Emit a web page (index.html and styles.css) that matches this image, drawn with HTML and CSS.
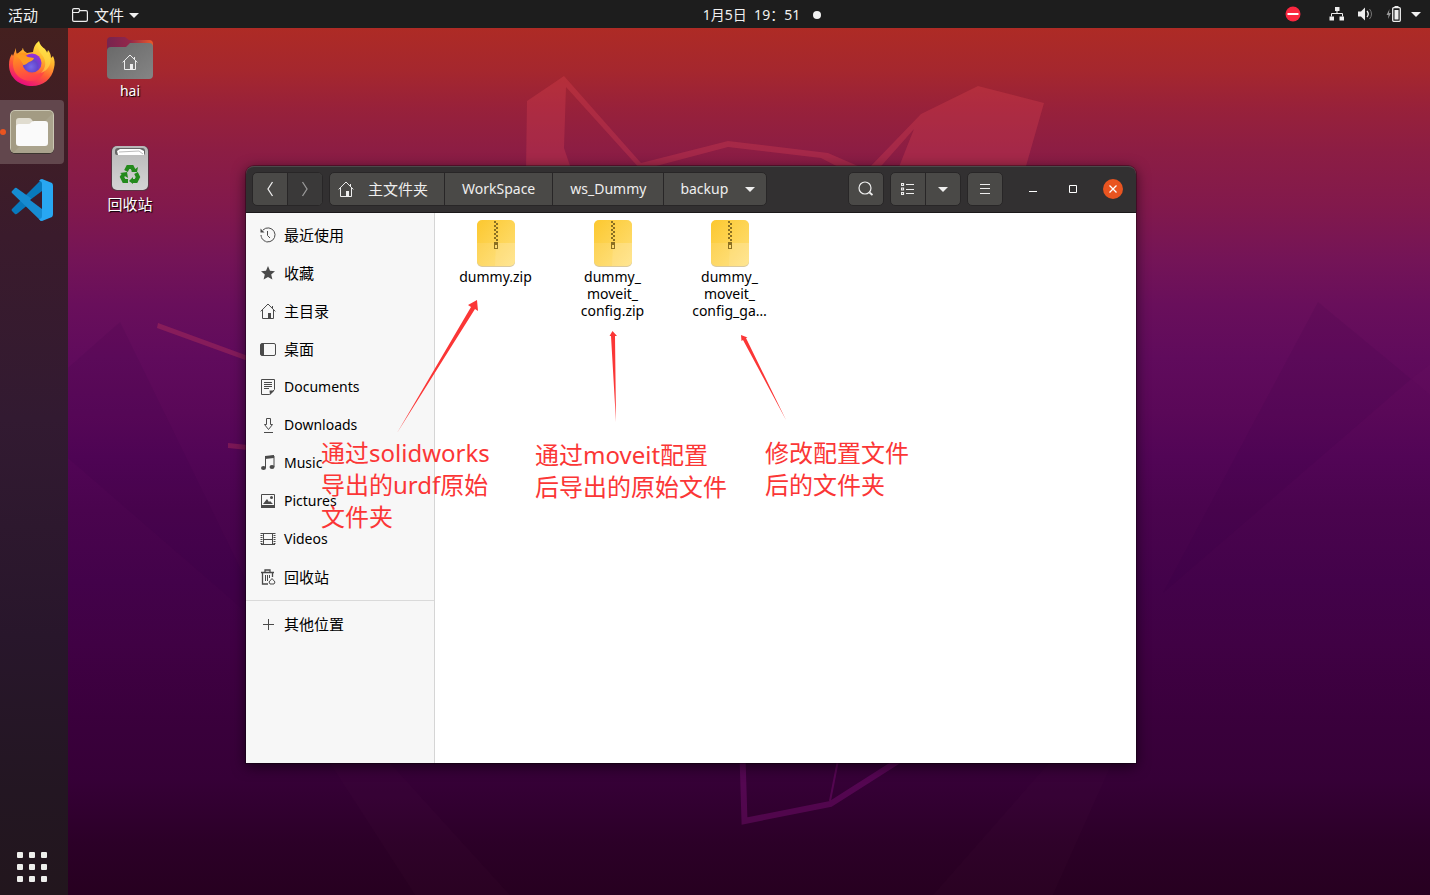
FILE: index.html
```html
<!DOCTYPE html>
<html lang="zh-CN">
<head>
<meta charset="utf-8">
<title>backup</title>
<link rel="stylesheet" href="styles.css">
</head>
<body>
<svg width="0" height="0" class="defs" aria-hidden="true">
  <defs>
    <linearGradient id="zipFill" x1="0" y1="0" x2="1" y2="1"><stop offset="0" stop-color="#fcc82f"/><stop offset="1" stop-color="#ffe079"/></linearGradient>
    <symbol id="zip" viewBox="0 0 38 47">
      <rect x="0" y="1" width="38" height="46" rx="5" fill="#d9c9a0"/>
      <rect x="0" y="0" width="38" height="46" rx="5" fill="url(#zipFill)"/>
      <path d="M0 23h38v18a5 5 0 0 1-5 5H5a5 5 0 0 1-5-5z" fill="#fff" opacity=".1"/>
      <path d="M19 23h19v18a5 5 0 0 1-5 5H18z" fill="#fff" opacity=".1"/>
      <path d="M17 1h2v2h-2zm2 2h2v2h-2zm-2 2h2v2h-2zm2 2h2v2h-2zm-2 2h2v2h-2zm2 2h2v2h-2zm-2 2h2v2h-2zm2 2h2v2h-2zm-2 2h2v2h-2zm2 2h2v2h-2z" fill="#8a6f22"/>
      <path d="M17 22h4v7h-4zm1 3v3h2v-3z" fill="#8a6f22" fill-rule="evenodd"/>
    </symbol>
    <symbol id="home" viewBox="0 0 16 16"><path d="M.7 8.4 8 1l7.300 7.400M2.500 7v8.500h11V7M12.500 3v2.500" fill="none" stroke="currentColor"/><path d="M8 10h3v5.500H8z" fill="currentColor"/></symbol>
    <symbol id="down" viewBox="0 0 10 5"><path d="M0 0h10L5 5z" fill="currentColor"/></symbol>
  </defs>
</svg>
<div class="desktop">
  <svg class="wallpaper" viewBox="0 0 1430 895" preserveAspectRatio="xMidYMid slice" aria-hidden="true">
    <g fill="#ee4c56" opacity=".25">
      <path d="M525 240 527 101 564 76 641 163 728 141 828 153 867 170 921 114 978 86 1044 103 1005 240H870L914 129 867 182 821 158 728 147 641 170 566 87 564 148 595 240z"/>
      <path d="m158 323 90 33v5l-91-33zM228 443l20 2v5l-20-2z"/>
    </g>
    <g fill="none" stroke="#96158c" opacity=".32"><path d="m742 740 2.500 81 86-17 88-56" stroke-width="6"/><path d="m842 740-12 61" stroke-width="2"/></g>
    <g fill="#300040" opacity=".09"><path d="m1318 302 93 77-248 214zM120 322l-52 46v90l178 154v-32z"/></g>
    <g fill="#d050a0" opacity=".02"><path d="M1049 763h63l-59 132H933zM330 763h60l120 132h-95zM1430 364l-19 15 19 16z"/></g>
  </svg>

  <header class="topbar">
    <div class="top-left">
      <button class="plain">活动</button>
      <button class="plain app-menu">
        <svg width="16" height="14" viewBox="0 0 16 14"><path d="M.6 12V2Q.6.600 2 .6h4.500q1 0 1 1v1H14q1.400 0 1.400 1.400v8q0 1.400-1.400 1.400H2Q.6 13.400.6 12zM.6 4.500h6l1-1.900" fill="none" stroke="#eee" stroke-width="1.200"/></svg>
        <span>文件</span>
        <svg width="10" height="5"><use href="#down"/></svg>
      </button>
    </div>
    <button class="plain clock"><span>1月5日&nbsp; 19：51</span><i class="dot"></i></button>
    <div class="top-right">
      <svg class="busy" width="16" height="16" viewBox="0 0 16 16"><circle cx="8" cy="8" r="7.500" fill="#fa2740"/><path d="M2.500 7h11v2h-11z" fill="#fff"/></svg>
      <svg class="net" width="16" height="14" viewBox="0 0 16 14"><path d="M6 0h4.500v4H6zM.5 9.500H5v4H.5zm10 0H15v4h-4.500z" fill="#eee"/><path d="M8 4v3M2.500 9.500v-3h11v3" fill="none" stroke="#eee"/></svg>
      <svg class="vol" width="16" height="14" viewBox="0 0 16 14"><path d="M0 4.500h3L7 .5v13l-4-4H0z" fill="#eee"/><path d="M9 4q2.500 3 0 6" fill="none" stroke="#eee" stroke-width="1.300"/><path d="M11.500 2q4 5 0 10" fill="none" stroke="#777"/></svg>
      <svg class="bat" width="15" height="16" viewBox="0 0 15 16"><path d="M3.500 3 .5 9h2L2 13l3-6H3z" fill="#999"/><rect x="6.700" y="1.700" width="7.600" height="13.600" rx="1" fill="none" stroke="#eee" stroke-width="1.300"/><path d="M8.500 0h4v1.500h-4zM8.500 4h4v9.500h-4z" fill="#eee"/></svg>
      <svg width="10" height="5"><use href="#down"/></svg>
    </div>
  </header>

  <div class="stage">
    <nav class="dock">
      <button class="dock-item" aria-label="Firefox">
        <svg width="48" height="48" viewBox="0 0 48 48">
          <defs>
            <linearGradient id="flame" x1=".8" y1=".05" x2=".35" y2="1"><stop offset="0" stop-color="#fff14a"/><stop offset=".35" stop-color="#ffb02c"/><stop offset=".65" stop-color="#ff5a35"/><stop offset="1" stop-color="#e80a80"/></linearGradient>
            <radialGradient id="globe" cx=".45" cy=".7" r=".7"><stop offset="0" stop-color="#7768e8"/><stop offset=".5" stop-color="#6545cc"/><stop offset="1" stop-color="#a02ad8"/></radialGradient>
            <linearGradient id="body" x1=".3" x2=".5" y2="1"><stop offset="0" stop-color="#ff9a1f"/><stop offset=".5" stop-color="#ff6a30"/><stop offset="1" stop-color="#ff3a50"/></linearGradient>
          </defs>
          <path d="M8 8c0 3 0 4 1 6l5-4c1-1 0-2 1-2 0 2 2 4 4 5l6-1c1-5 2-8 6-11 1 4 3 6 6 8l2 4 1-3c2 2 3 5 3 8l2-2c2 4 2 8 1 12-2 11-11 18-22 18C12 46 1 38 1 25c0-5 1-8 3-11l1 2z" fill="url(#flame)"/>
          <path d="M7 15c5-3 9-3 13-1l-3 6c-2 4-2 9 2 12 5 4 13 3 18-3-1 7-7 12-14 12C13 41 5 34 5 24c0-4 1-6 2-9z" fill="url(#body)"/>
          <circle cx="24" cy="23" r="9.500" fill="url(#globe)"/>
          <path d="M8 16c4-3 8-2 12 1l6 1c-1 3-3 3-5 4s-3 3-6 3c-1-4-4-7-7-9z" fill="#ff9b22"/>
          <path d="M31 3c-2 5 0 8 3 12 5 6 4 13-1 18 8-3 12-11 8-18-2-5-7-7-10-12z" fill="#ffe14a" opacity=".6"/>
        </svg>
      </button>
      <button class="dock-item active" aria-label="文件">
        <svg width="48" height="48" viewBox="0 0 48 48">
          <rect x="2" y="2" width="44" height="44" rx="5" fill="#3c3630"/><rect x="2" y="2" width="44" height="43" rx="5" fill="#cbc7b4"/><rect x="3" y="3" width="42" height="42" rx="4" fill="#a39b83"/>
          <path d="M45 5 5 45h37q3 0 3-3z" fill="#b3ad9a" opacity=".45"/>
          <path d="M8 13q0-3 3-3h10q2 0 3 2l2 3v8H8z" fill="#e0dccf"/><path d="M8 19q0-3 3-3h9q2 0 3-1.500t3-1.500h11q3 0 3 3v19q0 3-3 3H11q-3 0-3-3z" fill="#fafafa"/>
        </svg>
      </button>
      <button class="dock-item" aria-label="Visual Studio Code">
        <svg width="48" height="48" viewBox="0 0 48 48"><path d="m33 4 10 6-10 8L10 37q-2 2-3 1l-3-3q-1-1 0-2z" fill="#0879bd"/><path d="m4 15 3-3q1-1 3 1l35 25-12 7L4 17q-1-1 0-2z" fill="#168cd2"/><path d="m34 3 10 4q1 1 1 3v28q0 2-1 3l-10 4q-2 0-3-2 3 0 3-3V8q0-3-3-3 1-2 3-2z" fill="#28a7f2"/><path d="M34 15v18L22 24z" fill="#3b1c2d"/></svg>
      </button>
      <button class="dock-item apps" aria-label="显示应用程序">
        <i></i><i></i><i></i><i></i><i></i><i></i><i></i><i></i><i></i>
      </button>
    </nav>

    <main class="workspace">
      <div class="shortcuts">
        <button class="shortcut">
          <svg width="48" height="44" viewBox="0 0 48 44">
            <defs><linearGradient id="tab"><stop stop-color="#77244f"/><stop offset=".5" stop-color="#93264a"/><stop offset="1" stop-color="#eb5a2a"/></linearGradient><linearGradient id="gray" x2="1" y2="1"><stop stop-color="#686868"/><stop offset="1" stop-color="#858585"/></linearGradient></defs>
            <path d="M1 5q0-4 4-4h14l4 3h20q4 0 4 4v10H1z" fill="url(#tab)"/><path d="M1 15q0-4 4-4h15l4-4h19q4 0 4 4v28q0 4-4 4H5q-4 0-4-4z" fill="url(#gray)"/>
            <g class="folder-home"><svg x="16" y="18" width="16" height="16"><use href="#home"/></svg></g>
          </svg>
          <span>hai</span>
        </button>
        <button class="shortcut">
          <svg width="40" height="46" viewBox="0 0 40 46">
            <defs><linearGradient id="bin" x2="0" y2="1"><stop stop-color="#b8b8b8"/><stop offset="1" stop-color="#d4d4d4"/></linearGradient></defs>
            <rect x="1" y="1" width="38" height="45" rx="5" fill="#5b3344"/><rect x="2" y="1" width="36" height="44" rx="5" fill="url(#bin)"/><path d="M5 6q0-3 3-3h24q3 0 3 3v2q0 2-2 2H7q-2 0-2-2z" fill="#666"/><path d="m7 6 3-2h20l4 2v4H8z" fill="#fff"/><path d="m9 7 20-1 4 3" fill="none" stroke="#bbb"/>
            <g fill="none" stroke="#248a1c" stroke-width="4"><path d="m16 26 2-4h4l2 4M26 28l2 4-2 4h-4M18 36h-4l-2-4 2-3"/></g>
            <path d="m21 27 6 0 1-5zM23 32v7l-4-3zM10 28l7-1 1 6z" fill="#248a1c"/>
          </svg>
          <span class="cjk">回收站</span>
        </button>
      </div>

      <section class="window">
        <header class="titlebar">
          <div class="group nav">
            <button aria-label="后退"><svg width="8" height="16" viewBox="0 0 8 16"><path d="M6.500 1 2 8l4.500 7" fill="none" stroke="currentColor" stroke-width="1.300"/></svg></button>
            <button class="off" aria-label="前进"><svg width="8" height="16" viewBox="0 0 8 16"><path d="M1.500 1 6 8l-4.500 7" fill="none" stroke="currentColor" stroke-width="1.300"/></svg></button>
          </div>
          <div class="group path">
            <button class="cjk"><svg width="16" height="16"><use href="#home"/></svg>主文件夹</button>
            <button>WorkSpace</button>
            <button>ws_Dummy</button>
            <button>backup<svg width="10" height="5"><use href="#down"/></svg></button>
          </div>
          <div class="tools">
            <div class="group"><button aria-label="搜索"><svg width="16" height="16" viewBox="0 0 16 16"><circle cx="7" cy="7" r="6" fill="none" stroke="currentColor" stroke-width="1.200"/><path d="m11.500 11.500 3 2.500" stroke="currentColor" stroke-width="1.800"/></svg></button></div>
            <div class="group">
              <button aria-label="列表视图"><svg width="14" height="12" viewBox="0 0 14 12"><path d="M.5.500h2v2h-2zm0 4.500h2v2h-2zm0 4.500h2v2h-2z" fill="none" stroke="currentColor" stroke-width="1.200"/><path d="M5 1.500h8M5 6.500h8M5 10.500h8" stroke="currentColor"/></svg></button>
              <button aria-label="视图选项"><svg width="10" height="5"><use href="#down"/></svg></button>
            </div>
            <div class="group"><button aria-label="菜单"><svg width="10" height="10" viewBox="0 0 10 10"><path d="M0 .5h10M0 4.500h10M0 9.500h10" stroke="currentColor"/></svg></button></div>
          </div>
          <div class="controls">
            <button aria-label="最小化"><svg width="8" height="8"><path d="M0 6.500h8" stroke="#fff"/></svg></button>
            <button aria-label="最大化"><svg width="8" height="8"><path d="M.5.500h7v7h-7z" fill="none" stroke="#fff"/></svg></button>
            <button class="close" aria-label="关闭"><svg width="8" height="8"><path d="m.5.500 7 7m0-7-7 7" stroke="#fff" stroke-width="1.300"/></svg></button>
          </div>
        </header>
        <div class="body">
          <aside class="sidebar">
            <button class="place cjk"><svg width="16" height="16" viewBox="0 0 16 16"><path d="M3 3a7 7 0 1 1-2 5M7.500 4v4.500L10 11" fill="none" stroke="currentColor"/><path d="M1 8a7 7 0 0 0 7 7" fill="none" stroke="#999"/><path d="M.5 1.500v4h4z" fill="currentColor"/></svg>最近使用</button>
            <button class="place cjk"><svg width="16" height="16" viewBox="0 0 16 16"><path d="m8 1 2 4.700 5 .5-3.800 3.300 1.200 5L8 12l-4.400 2.500 1.200-5L1 6.200l5-.5z" fill="currentColor"/></svg>收藏</button>
            <button class="place cjk"><svg width="16" height="16"><use href="#home"/></svg>主目录</button>
            <button class="place cjk"><svg width="16" height="16" viewBox="0 0 16 16"><rect x=".5" y="2.500" width="15" height="12" rx="1.500" fill="none" stroke="currentColor"/><path d="M1 3h3v11H1z" fill="currentColor"/></svg>桌面</button>
            <button class="place"><svg width="16" height="16" viewBox="0 0 16 16"><path d="M1.500.500h13v10l-5 5h-8zM4 3.500h8M4 5.500h8M4 7.500h8M4 9.500h5" fill="none" stroke="currentColor"/><path d="M9.500 11.500h5l-4.500 4.500z" fill="currentColor"/></svg>Documents</button>
            <button class="place"><svg width="16" height="16" viewBox="0 0 16 16"><path d="M6.500 1.500h4v6h2l-4 5-4-5h2zM4 15.500h9" fill="none" stroke="currentColor"/></svg>Downloads</button>
            <button class="place"><svg width="16" height="16" viewBox="0 0 16 16"><path d="M5.500 13V2l8.500-1v11" fill="none" stroke="currentColor"/><path d="m5 1 9-1v3L5 4z" fill="currentColor"/><ellipse cx="3.500" cy="13" rx="2.500" ry="2" fill="currentColor"/><ellipse cx="12" cy="12" rx="2.500" ry="2" fill="currentColor"/></svg>Music</button>
            <button class="place"><svg width="16" height="16" viewBox="0 0 16 16"><path d="M1.500 1.500h13v13h-13z" fill="none" stroke="currentColor"/><path d="M1 12h14v3H1zM3 11l4-5 2 3 1-1 3 3z" fill="currentColor"/><circle cx="11.500" cy="4.500" r="1.500" fill="currentColor"/></svg>Pictures</button>
            <button class="place"><svg width="16" height="16" viewBox="0 0 16 16"><path d="M3.500 2v12M12.500 2v12M1 2.500h14M1 13.500h14M4 8.500h8" fill="none" stroke="currentColor"/><path d="M1.500 2v12M14.500 2v12" stroke="currentColor" stroke-width="2" stroke-dasharray="1 1"/></svg>Videos</button>
            <button class="place cjk"><svg width="16" height="16" viewBox="0 0 16 16"><path d="M1 3.500h13M5 3V1h5v2M2.500 4v11H8M12.500 4v4" fill="none" stroke="currentColor" stroke-width="1.300"/><path d="M5.500 6v6M7.500 6v6M9.500 6v3" stroke="currentColor"/><path d="m9 13 3-3.500 3 3.500-1 2h-4z" fill="none" stroke="currentColor"/></svg>回收站</button>
            <hr class="rule">
            <button class="place cjk"><svg width="16" height="16" viewBox="0 0 16 16"><path d="M3 8.500h11M8.500 3v11" stroke="currentColor"/></svg>其他位置</button>
          </aside>
          <div class="files">
            <button class="file"><svg width="38" height="47"><use href="#zip"/></svg><span>dummy.zip</span></button>
            <button class="file"><svg width="38" height="47"><use href="#zip"/></svg><span>dummy_<br>moveit_<br>config.zip</span></button>
            <button class="file"><svg width="38" height="47"><use href="#zip"/></svg><span>dummy_<br>moveit_<br>config_ga…</span></button>
          </div>
        </div>
        <svg class="arrows" width="560" height="270" viewBox="0 0 560 270" aria-hidden="true"><path d="m231 134-9 5 3 2-74 126 78-124 3 2zM366.500 165l-3 5h1.500l5 86-1-86h2zM495 169l.5 6 1.500-1 43 80-40-82 1.500-.5z" fill="#fb3636"/></svg>
        <p class="note first">通过solidworks<br>导出的urdf原始<br>文件夹</p>
        <p class="note second">通过moveit配置<br>后导出的原始文件</p>
        <p class="note third">修改配置文件<br>后的文件夹</p>
      </section>
    </main>
  </div>
</div>
</body>
</html>
```
FILE: styles.css
```css
* { box-sizing: border-box; }
body {
  margin: 0;
  font: 14px/20px "Noto Sans", "Noto Sans CJK SC", sans-serif;
}
button {
  margin: 0;
  padding: 0;
  border: 0;
  background: none;
  color: inherit;
  font: inherit;
}
svg { display: block; flex: none; }
.defs { position: absolute; }
.cjk, .topbar { font-family: "Noto Sans CJK SC", sans-serif; font-size: 15px; }

.desktop {
  position: relative;
  display: flex;
  flex-direction: column;
  height: 100vh;
  overflow: hidden;
  background: linear-gradient(#ae2b25 3%, #a5272e 8%, #98213a 12%, #8c1d44 17%, #82194c 23%, #741457 29%, #690f5b 34%, #600b5c 40%, #5a0858 46%, #520556 51%, #4a044e 57%, #43024a 65%, #400144 72%, #3a003c 80%, #360037 87%, #2c0028 94%, #270020);
}
.wallpaper { position: absolute; inset: 0; width: 100%; height: 100%; }

.topbar {
  position: relative;
  display: grid;
  grid-template-columns: 1fr auto 1fr;
  align-items: center;
  height: 28px;
  background: #1d1d1d;
  color: #f0f0f0;
}
.plain { display: flex; align-items: center; }
.top-left { display: flex; gap: 34px; padding: 2px 0 0 8px; }
.app-menu { gap: 6px; }
.app-menu svg:last-child { margin-left: -1px; }
.clock { gap: 13px; padding: 1px 0 0 94px; font-family: "Noto Sans", "Noto Sans CJK SC", sans-serif; font-size: 14px; }
.dot { width: 8px; height: 8px; border-radius: 50%; background: #f2f2f2; }
.top-right { display: flex; align-items: center; justify-content: flex-end; padding-right: 9px; }
.busy { margin-right: 28px; }
.net { margin-right: 13px; }
.vol { margin-right: 12px; }
.bat { margin-right: 10px; }

.stage { position: relative; display: flex; flex: 1; min-height: 0; }
.dock {
  display: flex;
  flex-direction: column;
  gap: 4px;
  width: 68px;
  padding: 4px 4px 0 0;
  background: linear-gradient(#44201f, #3a1b2c 24%, #321a31 45%, #28162b 70%, #231622 88%, #22161d);
}
.dock-item {
  position: relative;
  display: flex;
  align-items: center;
  justify-content: center;
  height: 64px;
  border-radius: 0 4px 4px 0;
}
.active { background: #62474d; }
.active::before {
  content: "";
  position: absolute;
  left: 0;
  top: 29px;
  width: 6px;
  height: 6px;
  border-radius: 50%;
  background: #e95420;
}
.apps {
  display: grid;
  grid-template-columns: repeat(3, 6px);
  gap: 6px;
  align-content: center;
  height: 56px;
  margin-top: auto;
}
.apps i { height: 6px; border-radius: 1px; background: #eeeeec; }

.workspace { position: relative; flex: 1; }
.shortcuts { display: flex; flex-direction: column; width: 124px; padding-top: 8px; gap: 43px; }
.shortcut {
  display: flex;
  flex-direction: column;
  align-items: center;
  color: #fff;
  text-shadow: 1px 1px 1px #000;
}
.shortcut span { line-height: 22px; }
.shortcut .cjk { line-height: 26px; }
.folder-home { color: #eee; }

.window {
  position: absolute;
  inset: 138px 294px 132px 178px;
  display: flex;
  flex-direction: column;
  border-radius: 8px 8px 0 0;
  box-shadow: 0 0 0 1px rgba(0, 0, 0, .3), 0 3px 14px rgba(0, 0, 0, .6);
}
.titlebar {
  display: flex;
  align-items: center;
  height: 47px;
  padding: 0 10px 1px 6px;
  border-top: 1px solid #4b494a;
  border-bottom: 1px solid #1b191a;
  border-radius: 8px 8px 0 0;
  background: #323031;
  color: #eee;
}
.group {
  display: flex;
  border: 1px solid #282627;
  border-radius: 5px;
  background: #4a4947;
}
.group button {
  display: flex;
  align-items: center;
  justify-content: center;
  min-width: 34px;
  height: 32px;
}
.group button + button { min-width: 35px; border-left: 1px solid #282627; }
.group .off { background: #3a3939; color: #999; border-radius: 0 4px 4px 0; }
.path { margin-left: 6px; }
.path button { padding: 0 17px; }
.path .cjk { gap: 14px; padding: 0 16px 0 8px; }
.path button:last-child { gap: 17px; padding: 0 11px 0 16px; }
.tools { display: flex; gap: 6px; margin-left: auto; }
.controls { display: flex; margin-left: 20px; gap: 20px; }
.controls button {
  display: flex;
  align-items: center;
  justify-content: center;
  width: 20px;
  height: 20px;
}
.controls .close { margin-right: 3px; border-radius: 50%; background: #e95420; }
.body { display: flex; flex: 1; min-height: 0; background: #fff; color: #000; }
.sidebar {
  display: flex;
  flex-direction: column;
  width: 189px;
  padding-top: 3px;
  border-right: 1px solid #d5d5d5;
  background: #f7f7f7;
}
.place {
  display: flex;
  align-items: center;
  gap: 8px;
  height: 38px;
  padding-left: 14px;
}
.place svg { color: #4a4a4a; }
.rule { width: 100%; margin: 4px 0; border: 0; border-top: 1px solid #dadada; }
.files { display: flex; align-items: flex-start; padding: 7px 2px; }
.file {
  display: flex;
  flex-direction: column;
  align-items: center;
  gap: 1px;
  width: 117px;
  line-height: 17px;
}

.arrows { position: absolute; left: 0; top: 0; }
.note {
  position: absolute;
  margin: 0;
  color: #fb3636;
  font-size: 24px;
  line-height: 32px;
  white-space: nowrap;
}
.first { left: 75px; top: 271px; }
.second { left: 289px; top: 273px; }
.third { left: 519px; top: 271px; }
```
